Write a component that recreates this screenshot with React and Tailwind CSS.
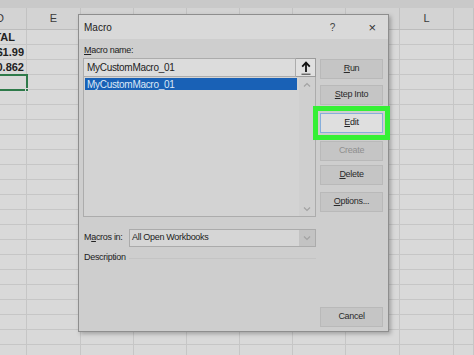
import React from 'react'

const colWidths = 'grid-cols-[27px_54px_53px_53px_53px_53px_53px_54px_54px_20px]'
// only the letters that are not under the dialog are drawn
const headers = ['D', 'E', '', '', '', '', '', '', 'L', '']

const Btn = ({ children, disabled, className = '' }) => (
  <div
    className={`h-[20px] flex items-center justify-center bg-[#c5c5c5] border border-[#b9b9b9] text-[9px] tracking-[-0.3px] ${
      disabled ? 'text-[#8f8f8f]' : 'text-[#2a2a2a]'
    } ${className}`}
  >
    {children}
  </div>
)

const Chevron = ({ up }) => (
  <svg width="8" height="5" viewBox="0 0 8 5" className="block">
    <path
      d={up ? 'M1 4.5 L4 1.5 L7 4.5' : 'M1 0.5 L4 3.5 L7 0.5'}
      fill="none"
      stroke="#a3a3a3"
      strokeWidth="1.2"
    />
  </svg>
)

const Sheet = () => {
  const rows = Array.from({ length: 22 })
  return (
    <div className="w-[474px] h-[355px] bg-[#d9d9d9] overflow-hidden">
      {/* ribbon edge */}
      <div className="h-[8px] bg-[#c9c9c9]" />
      {/* column headers */}
      <div className={`grid ${colWidths} h-[22px] bg-[#d3d3d3] border-b border-[#bcbcbc]`}>
        {headers.map((h, i) => (
          <div
            key={i}
            className={`border-r border-[#c2c2c2] flex items-center text-[11px] text-[#3a3a3a] overflow-hidden ${
              i === 0 ? 'justify-start' : 'justify-center'
            }`}
          >
            {i === 0 ? <span className="ml-[-4px]">{h}</span> : h}
          </div>
        ))}
      </div>
      {/* cells */}
      {rows.map((_, r) => (
        <div key={r} className={`grid ${colWidths} h-[15px]`}>
          {headers.map((h, c) => (
            <div key={c} className="relative border-r border-b border-[#c6c6c6] overflow-hidden">
              {c === 0 && r === 0 && (
                <div className="absolute right-[11px] top-0 leading-[14px] text-[11px] font-semibold text-[#222] whitespace-nowrap">
                  TOTAL
                </div>
              )}
              {c === 0 && r === 1 && (
                <div className="absolute right-[2px] top-0 leading-[14px] text-[11px] font-semibold text-[#222] whitespace-nowrap">
                  $1.99
                </div>
              )}
              {c === 0 && r === 2 && (
                <div className="absolute right-[2px] top-0 leading-[14px] text-[11px] font-semibold text-[#222] whitespace-nowrap">
                  $0.862
                </div>
              )}
            </div>
          ))}
        </div>
      ))}
    </div>
  )
}

const App = () => {
  return (
    <div
      className="relative w-[474px] h-[355px] overflow-hidden"
      style={{ fontFamily: '"Liberation Sans", Arial, sans-serif' }}
    >
      <Sheet />

      {/* active cell */}
      <div className="absolute left-[-2px] top-[74px] w-[30px] h-[17px] border-2 border-[#2e7a4a]">
        <div className="absolute right-[-3px] bottom-[-3px] w-[4px] h-[4px] bg-[#2e7a4a] border border-[#d9d9d9]" />
      </div>

      {/* Macro dialog */}
      <div className="absolute left-[78px] top-[14px] w-[311px] h-[318px] border border-[#8e8e8e] bg-[#cecece] shadow-[2px_2px_4px_rgba(0,0,0,0.25)] flex flex-col">
        {/* title bar */}
        <div className="h-[24px] bg-[#d9d9d9] flex items-center pl-[5px] text-[10px] text-[#222]">
          <span>Macro</span>
          <span className="ml-auto mr-[33px] text-[10px] text-[#444]">?</span>
          <span className="mr-[12px] text-[13px] font-light text-[#333] leading-none">×</span>
        </div>

        {/* body */}
        <div className="flex-1 flex pl-[4px] pb-[4px]">
          {/* left column */}
          <div className="w-[233px] flex flex-col text-[9px] tracking-[-0.3px] text-[#222]">
            <div className="mt-[5px] h-[13px] leading-[13px] pl-[1px]">
              <u>M</u>acro name:
            </div>
            <div className="mt-[1px] h-[19px] flex">
              <div className="w-[213px] bg-[#dcdcdc] border border-[#acacac] flex items-center pl-[3px] text-[10px]">
                MyCustomMacro_01
              </div>
              <div className="w-[20px] bg-[#e0e0e0] border border-[#9c9c9c] border-l-0 flex items-center justify-center">
                <svg width="10" height="14" viewBox="0 0 10 14">
                  <path d="M5 11 V2" stroke="#111" strokeWidth="1.8" />
                  <path d="M1.2 5.6 L5 1.6 L8.8 5.6" fill="none" stroke="#111" strokeWidth="1.8" />
                  <path d="M0.5 13.2 H9.5" stroke="#333" strokeWidth="1" />
                </svg>
              </div>
            </div>
            {/* list */}
            <div className="h-[140px] bg-[#d3d3d3] border border-[#acacac] border-t-0 flex">
              <div className="flex-1 pt-[1px] pl-[1px]">
                <div className="h-[12px] bg-[#1961b6] flex items-center pl-[2px] text-[10px] text-[#dce8f6]">
                  MyCustomMacro_01
                </div>
              </div>
              <div className="w-[16px] ml-[2px] bg-[#cfcfcf] flex flex-col items-center justify-between pt-[5px] pb-[4px]">
                <Chevron up />
                <Chevron />
              </div>
            </div>
            {/* macros in */}
            <div className="mt-[12px] h-[18px] flex items-center">
              <div className="w-[46px] pl-[1px]">
                M<u>a</u>cros in:
              </div>
              <div className="flex-1 h-full flex bg-[#d6d6d6] border border-[#ababab]">
                <div className="flex-1 flex items-center pl-[2px]">All Open Workbooks</div>
                <div className="w-[16px] bg-[#c3c3c3] flex items-center justify-center">
                  <Chevron />
                </div>
              </div>
            </div>
            {/* description */}
            <div className="mt-[4px] h-[14px] flex items-center">
              <span className="pl-[1px]">Description</span>
              <div className="flex-1 ml-[3px] border-t border-[#c4c4c4]" />
            </div>
          </div>

          {/* right column */}
          <div className="ml-[4px] w-[63px] flex flex-col">
            <Btn className="mt-[20px]">
              <span>
                <u>R</u>un
              </span>
            </Btn>
            <Btn className="mt-[6px]">
              <span>
                <u>S</u>tep Into
              </span>
            </Btn>
            <div className="mt-[1px] -mx-[7px] border-[5px] border-[#35f035] p-[2px]">
              <div className="h-[20px] flex items-center justify-center bg-[#dfdfdf] border border-[#86aedb] text-[9px] tracking-[-0.3px] text-[#222]">
                <span>
                  <u>E</u>dit
                </span>
              </div>
            </div>
            <Btn disabled className="mt-[1px]">
              Create
            </Btn>
            <Btn className="mt-[4px]">
              <span>
                <u>D</u>elete
              </span>
            </Btn>
            <Btn className="mt-[7px]">
              <span>
                <u>O</u>ptions...
              </span>
            </Btn>
            <Btn className="mt-auto">Cancel</Btn>
          </div>
        </div>
      </div>
    </div>
  )
}

export default App
